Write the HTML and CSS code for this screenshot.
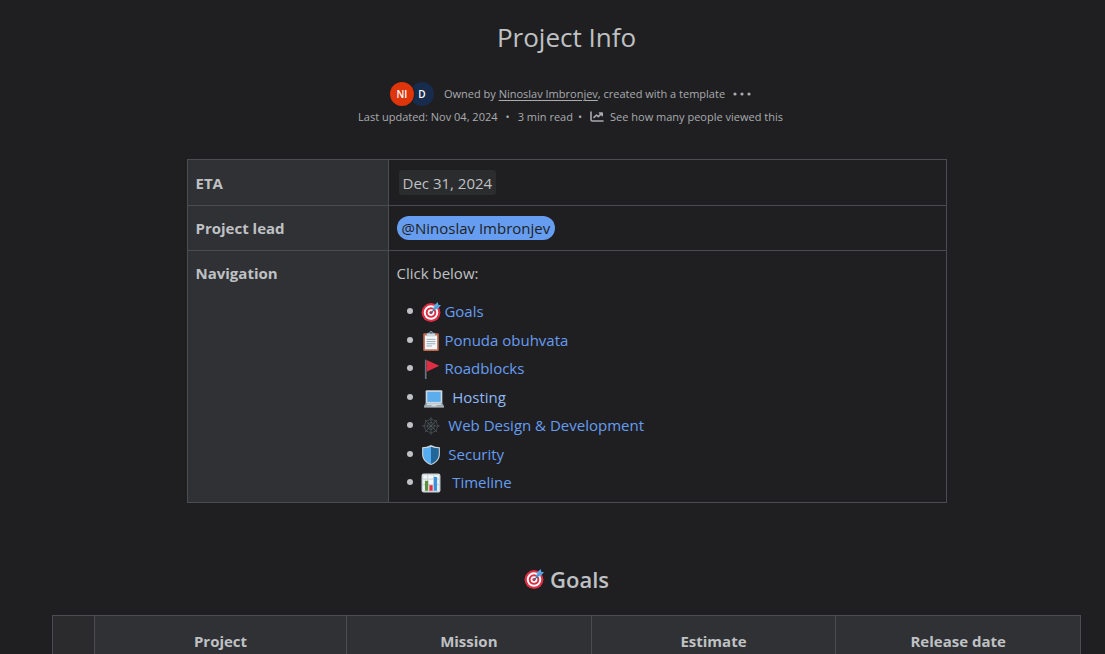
FILE: index.html
```html
<!DOCTYPE html>
<html lang="en">
<head>
    <title>Project Info</title>
    <meta charset="UTF-8">
    <meta name="viewport" content="width=device-width, initial-scale=1">
    <link rel="stylesheet" href="styles.css">
</head>
<body>
    <!-- Shared icon, used in the list and in the heading -->
    <svg class="sprite" aria-hidden="true">
        <symbol id="icon-target" viewBox="0 0 36 36">
            <circle cx="18" cy="19" r="17" fill="#dd2e44"/>
            <circle cx="18" cy="19" r="13" fill="#fff"/>
            <circle cx="18" cy="19" r="9.5" fill="#dd2e44"/>
            <circle cx="18" cy="19" r="6" fill="#fff"/>
            <circle cx="18" cy="19" r="3" fill="#dd2e44"/>
            <path d="M18 20 26 11" stroke="#2a6797" stroke-width="2" stroke-linecap="round"/>
            <path d="M22 14 23 7 30 0 31 5 36 6 29 13Z" fill="#5dadec"/>
            <path d="M24 13 31 6" stroke="#2a6797" stroke-width="1"/>
        </symbol>
    </svg>

    <main class="page">
        <header class="page-header">
            <h1 class="title">Project Info</h1>
            <div class="byline">
                <div class="avatars">
                    <span class="avatar avatar-ni">NI</span>
                    <span class="avatar avatar-d">D</span>
                </div>
                <span>Owned by <a href="#owner" class="owner">Ninoslav Imbronjev</a>, created with a template</span>
                <button type="button" class="more-button" aria-label="More details">
                    <svg width="18" height="6" viewBox="0 0 18 6" fill="currentColor"><circle cx="2" cy="3" r="1.6"/><circle cx="9" cy="3" r="1.6"/><circle cx="16" cy="3" r="1.6"/></svg>
                </button>
            </div>
            <div class="meta">
                <span>Last updated: Nov 04, 2024</span>
                <span class="dot">•</span>
                <span>3 min read</span>
                <span class="dot dot-tight">•</span>
                <button type="button" class="views-button">
                    <svg width="14" height="12" viewBox="0 0 14 12" fill="none" stroke="currentColor" stroke-width="1.6" stroke-linecap="round" stroke-linejoin="round"><path d="M1 1v7.6q0 1.4 1.4 1.4H13"/><path d="M4 6.4 6.5 4 8.3 5.6 12 2.2M9.4 2h2.8v2.8"/></svg>
                    See how many people viewed this
                </button>
            </div>
        </header>

        <table class="info-table">
            <tr>
                <th scope="row">ETA</th>
                <td><time class="date" datetime="2024-12-31">Dec 31, 2024</time></td>
            </tr>
            <tr>
                <th scope="row">Project lead</th>
                <td><a href="#lead" class="mention">@Ninoslav Imbronjev</a></td>
            </tr>
            <tr class="nav-row">
                <th scope="row">Navigation</th>
                <td>
                    <p class="nav-intro">Click below:</p>
                    <ul class="nav-list">
                        <li>
                            <svg class="emoji" aria-hidden="true"><use href="#icon-target"/></svg>
                            <a href="#goals">&nbsp;Goals</a>
                        </li>
                        <li>
                            <svg class="emoji" viewBox="0 0 36 36" aria-hidden="true"><rect x="4" y="4" width="28" height="32" rx="2" fill="#c1694f"/><path d="M7 8h22v25H7z" fill="#f5f8fa"/><path d="M10 9V5q0-2 3-2h2q0-3 3-3t3 3h2q3 0 3 2v4z" fill="#99aab5"/><path d="M11 10V6q0-1 2-1h10q2 0 2 1v4z" fill="#ccd6dd"/><circle cx="18" cy="3" r="1.4" fill="#292f33"/><path d="M10 15h16M10 19h16M10 23h16M10 27h10" stroke="#99aab5" stroke-width="1.8"/></svg>
                            <a href="#ponuda">&nbsp;Ponuda obuhvata</a>
                        </li>
                        <li>
                            <svg class="emoji" viewBox="0 0 36 36" aria-hidden="true"><path d="M8 1q2 0 2 2v33H8q-1 0-1-1V3q0-2 1-2z" fill="#66757f"/><path d="M10 2 33 12 10 23z" fill="#dd2e44"/></svg>
                            <a href="#roadblocks">&nbsp;Roadblocks</a>
                        </li>
                        <li>
                            &nbsp;<svg class="emoji" viewBox="0 0 36 36" aria-hidden="true"><path d="M5 4h26q2 0 2 2v21H3V6q0-2 2-2z" fill="#ccd6dd"/><path d="M6 7h24v18H6z" fill="#5dadec"/><path d="M3 27h30l3 6H0z" fill="#99aab5"/><path d="M6 28h24l1 2H5z" fill="#e1e8ed"/><path d="M0 33h36v1q0 1-2 1H2q-2 0-2-1z" fill="#ccd6dd"/><path d="M14 31h8l1 2H13z" fill="#e1e8ed"/></svg>
                            <a href="#hosting" class="hovered">&nbsp;&nbsp;Hosting</a>
                        </li>
                        <li>
                            <svg class="emoji" viewBox="0 0 36 36" fill="none" stroke="#56626b" stroke-width="1.1" aria-hidden="true"><path d="M18 2v32M2 18h32M7 7l22 22M29 7 7 29"/><path d="M18 5q4 3 9 4 1 5 4 9-3 4-4 9-5 1-9 4-4-3-9-4-1-5-4-9 3-4 4-9 5-1 9-4ZM18 11q2 2 5 2 0 3 2 5-2 2-2 5-3 0-5 2-2-2-5-2 0-3-2-5 2-2 2-5 3 0 5-2Z"/></svg>
                            <a href="#web">&nbsp;&nbsp;Web Design &amp; Development</a>
                        </li>
                        <li>
                            <svg class="emoji" viewBox="0 0 36 36" aria-hidden="true"><path d="M18 0Q26 4 34 4v12c0 10-6 16-16 20C8 32 2 26 2 16V4q8 0 16-4z" fill="#ccd6dd"/><path d="M18 3Q11 6 4 6v10c0 9 5 14 14 18z" fill="#55acee"/><path d="M18 3q7 3 14 3v10c0 9-5 14-14 18z" fill="#226699"/></svg>
                            <a href="#security">&nbsp;&nbsp;Security</a>
                        </li>
                        <li>
                            <svg class="emoji" viewBox="0 0 36 36" aria-hidden="true"><rect x="1" y="1" width="34" height="34" rx="4" fill="#ccd6dd"/><path d="M4 4h7v6H4zM13 4h9v6h-9zM24 4h8v6h-8zM4 12h7v8H4zM13 12h9v8h-9zM24 12h8v8h-8zM4 22h7v10H4zM13 22h9v10h-9zM24 22h8v10h-8z" fill="#f5f8fa"/><path d="M7 14h6v18H7z" fill="#5c913b"/><path d="M15 22h6v10h-6z" fill="#dd2e44"/><path d="M23 7h6v25h-6z" fill="#3b94d9"/></svg>
                            <a href="#timeline">&nbsp;&nbsp;&nbsp;Timeline</a>
                        </li>
                    </ul>
                </td>
            </tr>
        </table>

        <h2 class="section-title" id="goals"><svg class="emoji" aria-hidden="true"><use href="#icon-target"/></svg>Goals</h2>

        <table class="goals-table">
            <thead>
                <tr>
                    <th class="number-col"></th>
                    <th class="project-col" scope="col">Project</th>
                    <th scope="col">Mission</th>
                    <th scope="col">Estimate</th>
                    <th scope="col">Release date</th>
                </tr>
            </thead>
        </table>
    </main>
</body>
</html>
```
FILE: styles.css
```css
:root {
    --background: #1f1f21;
    --header-cell: #303134;
    --number-cell: #2b2b2d;
    --border: #4b4c50;
    --text: #bfc1c4;
    --text-subtle: #a9abaf;
    --link: #669df1;
    --link-hover: #8fb8f6;
}

* {
    box-sizing: border-box;
}

body {
    margin: 0;
    background-color: var(--background);
    color: var(--text);
    font-family: "Segoe UI", "Open Sans", "Noto Sans", sans-serif;
    font-size: 15px;
    line-height: 24px;
}

a {
    color: var(--link);
    text-decoration: none;
}

button {
    background: none;
    border: none;
    padding: 0;
    color: inherit;
    font: inherit;
    cursor: pointer;
}

.sprite {
    display: none;
}

.page {
    height: 100vh;
    overflow: hidden;
    padding: 19px 24px 0 52px;
}

.page-header {
    color: var(--text-subtle);
    font-size: 11px;
}

.title {
    margin: 0 0 26px;
    color: var(--text);
    font-size: 26px;
    font-weight: 400;
    line-height: 36px;
    text-align: center;
}

.byline,
.meta {
    display: flex;
    align-items: center;
    justify-content: center;
}

.byline {
    height: 26px;
    padding-left: 8px;
}

.avatars {
    display: flex;
    margin-right: 10px;
}

.avatar {
    width: 24px;
    height: 24px;
    border-radius: 50%;
    color: #ffffff;
    font-size: 10px;
    font-weight: 600;
    text-align: center;
}

.avatar-ni {
    position: relative;
    background-color: #de350b;
    box-shadow: 0 0 0 1px var(--background);
}

.avatar-d {
    margin-left: -4px;
    background-color: #172b4d;
}

.owner {
    color: inherit;
    text-decoration: underline;
    text-underline-offset: 2px;
}

.more-button {
    display: flex;
    margin-left: 8px;
}

.meta {
    height: 20px;
    padding-left: 8px;
}

.dot {
    margin: 0 8px;
}

.dot-tight {
    margin-left: 5px;
}

.views-button {
    display: flex;
    align-items: center;
    gap: 6px;
}

table {
    border-collapse: collapse;
    table-layout: fixed;
}

th,
td {
    border: 1px solid var(--border);
}

th {
    background-color: var(--header-cell);
    font-weight: 700;
}

.info-table {
    width: 100%;
    max-width: 760px;
    margin: 32px auto 0;
}

.info-table th {
    width: 201px;
    padding: 10px 8px;
    text-align: left;
}

.info-table td {
    padding: 10px 8px;
}

.info-table .nav-row th,
.info-table .nav-row td {
    padding-bottom: 8px;
    vertical-align: top;
}

.date {
    display: inline-block;
    margin-left: 2px;
    padding: 1px 4px 0;
    border-radius: 3px;
    background-color: #2b2c2e;
}

.mention {
    display: inline-block;
    padding: 0 5px;
    border-radius: 20px;
    background-color: #669df1;
    color: #1f1f21;
}

.nav-intro {
    margin: 0 0 14px;
}

/* Items spread over the height of the list */
.nav-list {
    display: flex;
    flex-direction: column;
    justify-content: space-between;
    height: 195px;
    margin: 0;
    padding: 0 0 0 10px;
    list-style: none;
}

.nav-list li {
    display: flex;
    align-items: center;
}

.nav-list li::before {
    content: "";
    width: 6px;
    height: 6px;
    margin-right: 8px;
    border-radius: 50%;
    background-color: var(--text);
}

.emoji {
    flex-shrink: 0;
    width: 20px;
    height: 20px;
}

.nav-list .emoji {
    margin-top: 2px;
}

.hovered {
    color: var(--link-hover);
}

.section-title {
    display: flex;
    align-items: center;
    justify-content: center;
    gap: 6px;
    margin: 62px 0 22px;
    font-size: 22px;
    font-weight: 600;
    line-height: 28px;
}

.goals-table {
    width: 100%;
}

.goals-table th {
    height: 50px;
    padding: 0 8px;
}

.goals-table .number-col {
    width: 42px;
    background-color: var(--number-cell);
}

.goals-table .project-col {
    width: 252px;
}
```
